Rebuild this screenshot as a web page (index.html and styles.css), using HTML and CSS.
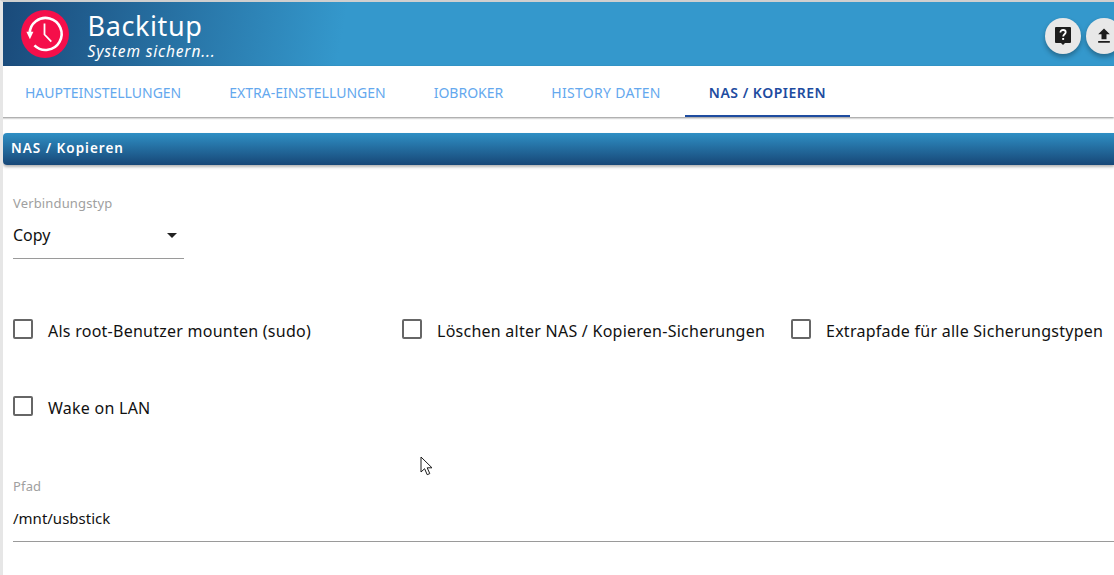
FILE: index.html
```html
<!DOCTYPE html>
<html lang="de">
<head>
<meta charset="utf-8">
<title>Backitup</title>
<link rel="stylesheet" href="styles.css">
</head>
<body>
<div class="app">
  <header class="header">
    <div class="logo">
      <svg viewBox="0 0 48 48" width="48" height="48">
        <circle cx="24" cy="24" r="24" fill="#f50f4a"/>
        <path d="M8.6 24a16 16 0 1 1 4.8 11.4" fill="none" stroke="#fff" stroke-width="2.6"/>
        <path d="M5.4 21.8h7l-3.5 7.4z" fill="#fff"/>
        <path d="M23.5 13.5v11l6.8 7.2" fill="none" stroke="#fff" stroke-width="1.8"/>
      </svg>
    </div>
    <div class="titles">
      <div class="title">Backitup</div>
      <div class="subtitle">System sichern...</div>
    </div>
    <div class="actions">
      <button class="round">
        <svg viewBox="0 0 24 24" width="24" height="24"><path d="M5 3h14a1 1 0 0 1 1 1v14a1 1 0 0 1-1 1h-5l-2 2-2-2H5a1 1 0 0 1-1-1V4a1 1 0 0 1 1-1z" fill="#1d1d1d"/><path d="M9.4 8.6c0-1.6 1.2-2.6 2.7-2.6s2.6 1 2.6 2.3c0 2-2.5 2-2.5 4.3" fill="none" stroke="#fff" stroke-width="1.8"/><rect x="11.2" y="14" width="1.9" height="1.9" fill="#fff"/></svg>
      </button>
      <button class="round">
        <svg viewBox="0 0 24 24" width="20" height="20"><path d="M9 16h6v-6h4l-7-7-7 7h4zm-4 2h14v2H5z" fill="#1d1d1d"/></svg>
      </button>
    </div>
  </header>
  <nav class="tabs">
    <a class="tab">Haupteinstellungen</a>
    <a class="tab">Extra-Einstellungen</a>
    <a class="tab">ioBroker</a>
    <a class="tab tab-wide">History Daten</a>
    <a class="tab active">NAS / Kopieren</a>
  </nav>
  <main class="content">
    <div class="bar">NAS / Kopieren</div>
    <div class="field select-field">
      <label class="label">Verbindungstyp</label>
      <div class="value">Copy<span class="caret"></span></div>
    </div>
    <div class="checks">
      <label class="check"><span class="box"></span>Als root-Benutzer mounten (sudo)</label>
      <label class="check"><span class="box"></span>Löschen alter NAS / Kopieren-Sicherungen</label>
      <label class="check"><span class="box"></span>Extrapfade für alle Sicherungstypen</label>
      <label class="check"><span class="box"></span>Wake on LAN</label>
    </div>
    <div class="field path-field">
      <label class="label">Pfad</label>
      <div class="value path-value">/mnt/usbstick</div>
    </div>
  </main>
  <svg class="cursor" viewBox="0 0 13 20" width="13" height="20"><path d="M1 1v15l3.6-3.3 2.6 6 2.6-1.1-2.6-5.8H12z" fill="#fff" stroke="#1a1a1a" stroke-width="1"/></svg>
</div>
</body>
</html>
```
FILE: styles.css
```css
* { box-sizing: border-box; }
html, body { margin: 0; height: 100%; overflow: hidden; background: #fff; }
body { font-family: "Noto Sans", "Open Sans", sans-serif; color: #111; }
.app {
  position: relative;
  width: 1114px;
  height: 575px;
  overflow: hidden;
  border-top: 2px solid #cfcfcf;
  border-left: 3px solid #e6e6e6;
}
.header {
  height: 64px;
  display: flex;
  align-items: center;
  padding-left: 18px;
  background: linear-gradient(100deg, #1a4a7a 0, #3498cc 340px);
  color: #fff;
}
.logo { width: 48px; height: 48px; }
.titles { margin-left: 18.5px; padding-top: 1px; }
.title { font-size: 27px; line-height: 32px; letter-spacing: 0.6px; }
.subtitle { font-size: 15.5px; line-height: 18px; font-style: italic; letter-spacing: 0.85px; }
.actions { margin-left: auto; display: flex; gap: 5px; margin-right: -8px; padding-top: 4px; }
.round {
  width: 36px;
  height: 36px;
  border: 0;
  padding: 0;
  border-radius: 50%;
  background: #e8e8e8;
  display: flex;
  align-items: center;
  justify-content: center;
  box-shadow: 0 3px 5px rgba(0,0,0,.3);
}
.tabs {
  height: 51px;
  display: flex;
  margin-left: -2px;
  background: #fff;
  box-shadow: 0 1px 2px rgba(0,0,0,.45);
}
.tab {
  padding: 0 24px;
  line-height: 53px;
  font-size: 14px;
  text-transform: uppercase;
  color: #64a8ee;
  white-space: nowrap;
}
.tab-wide { letter-spacing: 0.3px; }
.tab.active {
  color: #1e4ca0;
  font-weight: 600;
  letter-spacing: 0.5px;
  border-bottom: 2px solid #1e4ca0;
}
.content { padding-top: 16px; }
.bar {
  height: 32px;
  padding-left: 8px;
  line-height: 30px;
  font-size: 13.5px;
  font-weight: 600;
  letter-spacing: 1px;
  color: #fff;
  border-radius: 4px 0 0 4px;
  background: linear-gradient(180deg, #2f8fc4 0, #174777 100%);
  box-shadow: 0 2px 3px rgba(0,0,0,.3);
}
.field { margin-left: 10px; }
.select-field { width: 171px; margin-top: 30px; }
.label { display: block; font-size: 13px; line-height: 16px; letter-spacing: 0.15px; color: #a0a0a0; }
.value {
  position: relative;
  font-size: 16px;
  line-height: 22px;
  padding: 13px 0 12px;
  color: #111;
  border-bottom: 1px solid #9a9a9a;
}
.path-value { font-size: 15px; }
.caret {
  position: absolute;
  right: 7px;
  top: 22px;
  border-left: 5px solid transparent;
  border-right: 5px solid transparent;
  border-top: 5px solid #222;
}
.checks {
  display: grid;
  grid-template-columns: 389px 389px 1fr;
  grid-auto-rows: 77px;
  margin: 33px 0 0 10px;
  height: 186px;
  white-space: nowrap;
}
.check {
  display: flex;
  align-items: center;
  height: 77px;
  font-size: 16px;
  letter-spacing: 0.25px;
}
.box {
  width: 20px;
  height: 20px;
  margin: 0 15px 4px 0;
  border: 2px solid #666;
  border-radius: 2px;
  flex: none;
}
.cursor { position: absolute; left: 417px; top: 454px; }
```
